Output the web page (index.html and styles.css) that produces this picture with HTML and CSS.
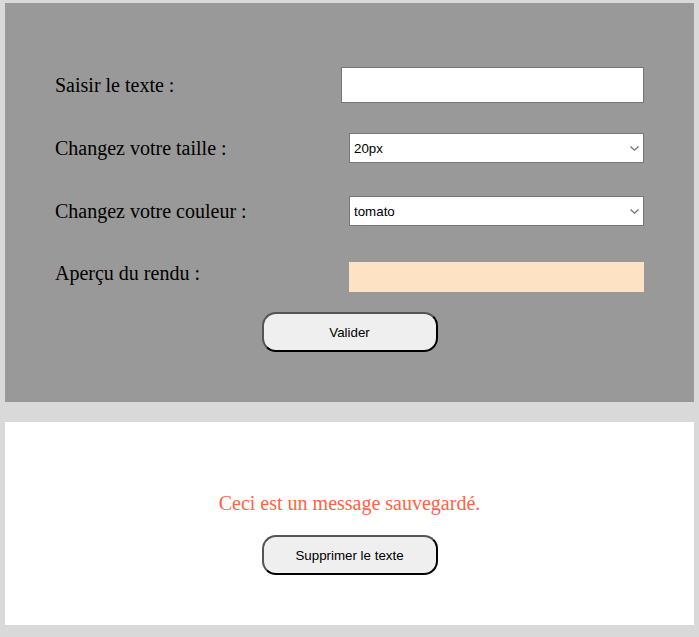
FILE: index.html
```html
<!DOCTYPE html>
<html lang="fr">
<head>
<meta charset="utf-8">
<title>Message</title>
<link rel="stylesheet" href="styles.css">
</head>
<body>
<main class="page">
  <section class="panel panel-form">
    <div class="row row-text">
      <label class="label" for="texte">Saisir le texte :</label>
      <input class="field field-text" id="texte" type="text">
    </div>
    <div class="row row-size">
      <label class="label" for="taille">Changez votre taille :</label>
      <span class="select-wrap">
        <select class="field field-select" id="taille">
          <option>20px</option>
        </select>
        <svg class="chevron" width="9" height="5" viewBox="0 0 9 5" aria-hidden="true"><path d="M0.5 0.5 L4.5 4.2 L8.5 0.5" fill="none" stroke="#6f6f6f" stroke-width="1.2"/></svg>
      </span>
    </div>
    <div class="row row-color">
      <label class="label" for="couleur">Changez votre couleur :</label>
      <span class="select-wrap">
        <select class="field field-select" id="couleur">
          <option>tomato</option>
        </select>
        <svg class="chevron" width="9" height="5" viewBox="0 0 9 5" aria-hidden="true"><path d="M0.5 0.5 L4.5 4.2 L8.5 0.5" fill="none" stroke="#6f6f6f" stroke-width="1.2"/></svg>
      </span>
    </div>
    <div class="row row-preview">
      <span class="label">Aperçu du rendu :</span>
      <div class="preview"></div>
    </div>
    <div class="actions">
      <button class="btn" type="button">Valider</button>
    </div>
  </section>
  <section class="panel panel-saved">
    <p class="saved-msg">Ceci est un message sauvegardé.</p>
    <button class="btn" type="button">Supprimer le texte</button>
  </section>
</main>
</body>
</html>
```
FILE: styles.css
```css
html, body {
  margin: 0;
  padding: 0;
  background: #d9d9d9;
}

.page {
  padding: 3px 5px 12px 5px;
  display: flex;
  flex-direction: column;
  gap: 20px;
}

.panel {
  box-sizing: border-box;
}

.panel-form {
  background: #999999;
  padding: 64px 50px 50px 50px;
  height: 399px;
  display: flex;
  flex-direction: column;
}

.row {
  display: flex;
  align-items: center;
  justify-content: space-between;
}

.row-size { margin-top: 30px; }
.row-color { margin-top: 33px; }
.row-preview { margin-top: 36px; }

.label {
  font-family: "Liberation Serif", "Times New Roman", serif;
  font-size: 20px;
  color: #000;
}

.row-preview .label {
  position: relative;
  top: -4px;
}

.field {
  box-sizing: border-box;
  font-family: "Liberation Sans", Arial, sans-serif;
  font-size: 13.333px;
  border: 1px solid #767676;
  border-radius: 0;
  background: #fff;
  color: #000;
  margin: 0;
}

.field-text {
  width: 303px;
  height: 36px;
  padding: 0 4px;
}

.select-wrap {
  position: relative;
  display: block;
  width: 295px;
  height: 30px;
}

.field-select {
  -webkit-appearance: none;
  appearance: none;
  display: block;
  width: 295px;
  height: 30px;
  padding: 0 20px 0 4px;
  outline: none;
}

.chevron {
  position: absolute;
  right: 5px;
  top: 13px;
  pointer-events: none;
}

.preview {
  width: 295px;
  height: 30px;
  background: #fde3c4;
}

.actions {
  display: flex;
  justify-content: center;
  margin-top: 20px;
}

.btn {
  box-sizing: border-box;
  width: 176px;
  height: 40px;
  border-radius: 14px;
  border: 2px solid;
  border-color: #555 #000 #000 #555;
  background: #efefef;
  font-family: "Liberation Sans", Arial, sans-serif;
  font-size: 13.333px;
  color: #000;
  padding: 0;
  margin: 0;
}

.panel-saved {
  background: #ffffff;
  height: 203px;
  padding-top: 70px;
  display: flex;
  flex-direction: column;
  align-items: center;
}

.saved-msg {
  margin: 0 0 20px 0;
  font-family: "Liberation Serif", "Times New Roman", serif;
  font-size: 20px;
  color: tomato;
  line-height: 23px;
}
```
